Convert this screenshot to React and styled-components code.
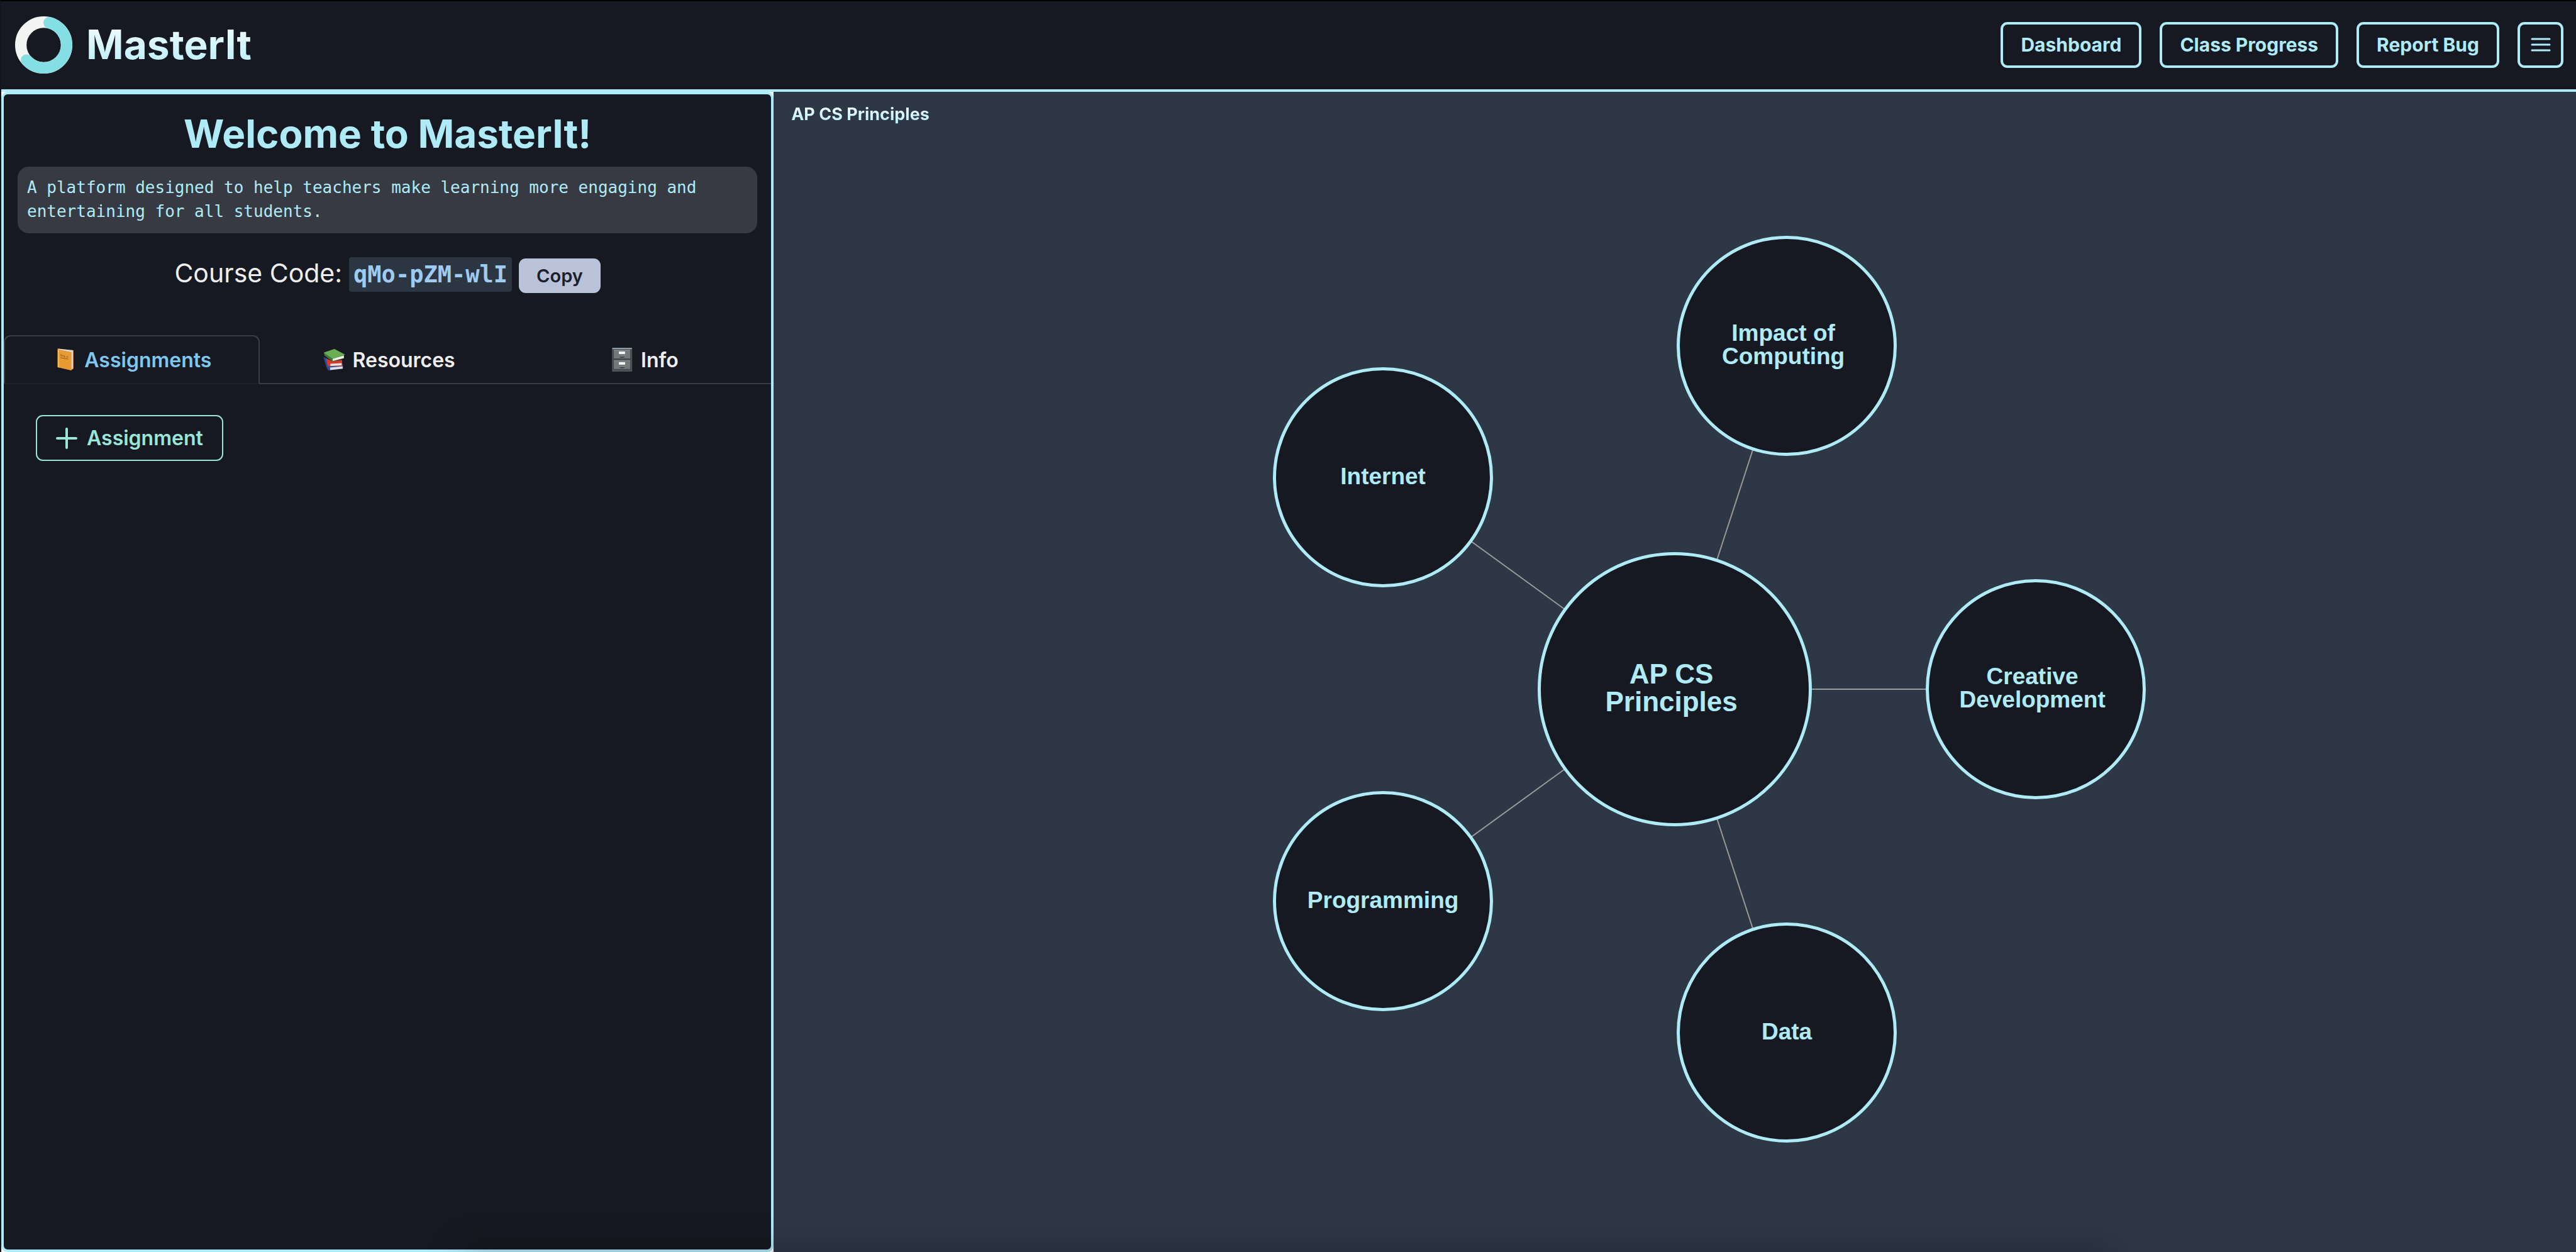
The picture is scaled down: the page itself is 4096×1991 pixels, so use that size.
import React, { useState } from "react";
import styled, { createGlobalStyle } from "styled-components";

const c = {
  night: "#171922",
  slate: "#2d3746",
  ice: "#aeebf7",
  mint: "#9ae6d9",
  line: "#3b3e47",
  text: "#eeeeee",
};

const GlobalStyle = createGlobalStyle`
  *, *::before, *::after { box-sizing: border-box; }
  body {
    margin: 0;
    background: #ffffff;
    color: ${c.text};
    font-family: Inter, "Liberation Sans", sans-serif;
  }
  h1, h2, p { margin: 0; }
  button { margin: 0; font-family: inherit; cursor: pointer; }
`;

const Shell = styled.div`
  display: flex;
  flex-direction: column;
  min-height: 100vh;
  border-top: 2px solid #000000;
  border-left: 2px solid #15141b;
`;

const Header = styled.header`
  display: flex;
  align-items: center;
  justify-content: space-between;
  height: 144px;
  padding: 0 20px 2px 22px;
  background: ${c.night};
  border-bottom: 4px solid ${c.ice};
`;

const Brand = styled.div`
  display: flex;
  align-items: center;
  gap: 22px;
`;

const LogoMark = styled.svg`
  width: 91px;
  height: 91px;
`;

const gradientText = `
  background: linear-gradient(#ffffff, ${c.ice});
  background-clip: text;
  -webkit-background-clip: text;
  color: transparent;
`;

const BrandName = styled.h1`
  font-size: 64px;
  line-height: 96px;
  font-weight: 700;
  ${gradientText}
`;

const Nav = styled.nav`
  display: flex;
  gap: 29px;
`;

const NavButton = styled.button`
  display: flex;
  align-items: center;
  justify-content: center;
  min-width: 73px;
  height: 73px;
  padding: 0 ${(p) => (p.$icon ? 0 : 28)}px;
  border: 4px solid ${c.ice};
  border-radius: 11px;
  background: transparent;
  color: ${c.ice};
  font-size: 30px;
  font-weight: 700;
`;

const MenuIcon = styled.svg`
  width: 32px;
  height: 22px;
`;

const Body = styled.main`
  display: flex;
  flex: 1;
`;

const SidePanel = styled.aside`
  display: flex;
  flex-direction: column;
  flex: 0 0 30%;
  border: 4px solid ${c.ice};
  border-radius: 10px;
  background: ${c.night};
`;

const Welcome = styled.h2`
  padding-top: 17px;
  color: ${c.ice};
  font-size: 62px;
  line-height: 92px;
  font-weight: 700;
  text-align: center;
`;

const Description = styled.p`
  margin: 6px 22px 0;
  padding: 14px 15px 16px;
  border-radius: 18px;
  background: #383a43;
  color: ${c.ice};
  font-family: "DejaVu Sans Mono", monospace;
  font-size: 26px;
  line-height: 38px;
`;

const CourseRow = styled.div`
  display: flex;
  align-items: baseline;
  justify-content: center;
  gap: 11px;
  margin-top: 36px;
`;

const CourseLabel = styled.span`
  font-size: 41px;
  line-height: 55px;
`;

const CourseCode = styled.code`
  padding: 0 7px;
  border-radius: 4px;
  background: #2c3642;
  color: #9ecbf2;
  font-family: "DejaVu Sans Mono", monospace;
  font-size: 37px;
  line-height: 55px;
  font-weight: 700;
`;

const CopyButton = styled.button`
  height: 55px;
  padding: 0 28px;
  border: 0;
  border-radius: 11px;
  background: #b9c2d9;
  color: #1b202c;
  font-size: 29px;
  font-weight: 600;
`;

const TabList = styled.div`
  display: flex;
  margin-top: 67px;
  border-bottom: 2px solid ${c.line};
`;

const Tab = styled.button`
  display: flex;
  flex: 1 1 0;
  align-items: center;
  justify-content: center;
  gap: 12px;
  height: 78px;
  margin-bottom: -2px;
  padding: 0 0 0 4px;
  border: 2px solid transparent;
  border-radius: 11px 11px 0 0;
  background: transparent;
  color: ${c.text};
  font-size: 32px;
  font-weight: 600;

  &[aria-selected="true"] {
    border-color: ${c.line} ${c.line} #1c202b;
    background: ${c.night};
    color: #80c7ee;
  }
`;

const TabIcon = styled.svg`
  width: 36px;
  height: 40px;
`;

const TabPanel = styled.div`
  padding: 49px 51px;
`;

const AddButton = styled.button`
  display: flex;
  align-items: center;
  gap: 15px;
  height: 73px;
  padding: 0 30px;
  border: 2px solid ${c.mint};
  border-radius: 11px;
  background: transparent;
  color: ${c.mint};
  font-size: 32px;
  font-weight: 600;
`;

const PlusIcon = styled.svg`
  width: 34px;
  height: 34px;
`;

const Canvas = styled.section`
  display: flex;
  flex: 1;
  flex-direction: column;
  background: ${c.slate};
`;

const CanvasTitle = styled.h2`
  align-self: flex-start;
  margin: 16px 28px 0;
  font-size: 27px;
  line-height: 39px;
  font-weight: 700;
  ${gradientText}
`;

const Stage = styled.div`
  position: relative;
  flex: 1;
  min-height: 1600px;
`;

const Links = styled.svg`
  position: absolute;
  left: calc(50% - 600px);
  top: calc(50% - 600px);
  width: 1200px;
  height: 1200px;
`;

const Node = styled.button`
  position: absolute;
  left: calc(50% + ${(p) => p.$x - p.$size / 2}px);
  top: calc(50% + ${(p) => p.$y - p.$size / 2}px);
  display: flex;
  align-items: center;
  justify-content: center;
  width: ${(p) => p.$size}px;
  height: ${(p) => p.$size}px;
  padding: 0 ${(p) => (p.$wrapped ? 11 : 0)}px 4px 0;
  border: 5px solid ${c.ice};
  border-radius: 50%;
  background: ${c.night};
  color: ${c.ice};
  font-family: "Liberation Sans", Arial, sans-serif;
  font-size: ${(p) => (p.$root ? 44 : 37)}px;
  line-height: ${(p) => (p.$root ? 44 : 37)}px;
  font-weight: 700;
  text-align: center;
  white-space: pre-line;
`;

const DockShadow = styled.div`
  position: fixed;
  top: 100%;
  left: 18%;
  right: 18%;
  height: 60px;
  box-shadow: 0 0 60px rgba(0, 0, 0, 0.26);
  pointer-events: none;
`;

const topics = [
  { name: "Creative\nDevelopment", x: 574, y: 0 },
  { name: "Data", x: 178, y: 546 },
  { name: "Programming", x: -464, y: 337 },
  { name: "Internet", x: -464, y: -337 },
  { name: "Impact of\nComputing", x: 178, y: -546 },
];

function Logo() {
  return (
    <LogoMark viewBox="0 0 100 100" aria-hidden="true" fill="none" strokeWidth="20">
      <circle cx="50" cy="50" r="40" stroke="#f4f4f4" />
      <path d="M59.5 11.2 A40 40 0 1 1 20 76.5" stroke="#84dfe5" strokeLinecap="round" />
    </LogoMark>
  );
}

function BookIcon() {
  return (
    <TabIcon viewBox="0 0 40 44" aria-hidden="true">
      <path d="M2.5 3 L6.5 2 V35.5 L2.5 34.5 Z" fill="#1d1712" />
      <path d="M6 2.2 L34.4 5.2 V38 L30.3 41 L6 35 Z" fill="#b5641f" />
      <path d="M7 2.6 L33.6 5.4 V37.2 L30.3 39.4 V9 L8 4.4 Z" fill="#d9d6d2" />
      <path d="M6.5 4 L30.3 9 V41 L6.5 35.4 Z" fill="#e89a33" />
      <path d="M6.5 4 L9 4.6 V36 L6.5 35.4 Z" fill="#f5b64c" />
      <path d="M11 12.2 l2 3.6 1.4-2.8 M16 14 v3 M18.5 14.4 v3 h2 M24 15.4 l-1.6 2.2 h2.6 M11 18.4 l14 2.6" fill="none" stroke="#8f5418" strokeWidth="1" />
    </TabIcon>
  );
}

function BooksIcon() {
  return (
    <TabIcon viewBox="4 26 112 122" aria-hidden="true">
      <path d="M8 74 L22 80 L32 118 L104 110 L106 130 L32 141 L22 122 Z" fill="#2b4a9c" />
      <path d="M40 126 L102 120 L104 131 L42 138 Z" fill="#dcdfe6" />
      <path d="M21 80 L52 95 L100 88 L102 119 L29 120 Z" fill="#d23a2b" />
      <path d="M42 107 L98 104 L98 115 L42 118 Z" fill="#e9e5e3" />
      <path d="M10 52 L62 34 L114 61 L109 66 L110 80 L53 96 L13 66 Z" fill="#3f7a35" />
      <path d="M54 82 L109 66 L109 79 L54 93 Z" fill="#ecefeb" />
      <path d="M10 52 L62 34 L114 61 L54 82 Z" fill="#6bad55" />
    </TabIcon>
  );
}

function CabinetIcon() {
  return (
    <TabIcon viewBox="-2 -1 38 43" aria-hidden="true">
      <rect width="34.4" height="41" rx="1" fill="#4c5356" />
      <rect x="0.6" y="0.4" width="33.2" height="2" fill="#9aacb0" />
      {[3.3, 21.3].map((y) => (
        <g key={y}>
          <rect x="2.6" y={y} width="29" height="15.6" fill="#72797b" stroke="#3a4043" strokeWidth="0.9" />
          <rect x="3.2" y={y + 0.6} width="27.8" height="1" fill="#949d9f" />
          <rect x="11.4" y={y + 2.8} width="11.2" height="5.2" fill="#f4f4f4" stroke="#565c5f" strokeWidth="0.6" />
          <path d={`M11.4 ${y + 10.6} h11.2 c0 4.4 -11.2 4.4 -11.2 0 Z`} fill="#363d40" />
          <rect x="11.4" y={y + 10.4} width="11.2" height="1.2" fill="#9ba4a6" />
        </g>
      ))}
    </TabIcon>
  );
}

const tabs = [
  { name: "Assignments", Icon: BookIcon },
  { name: "Resources", Icon: BooksIcon },
  { name: "Info", Icon: CabinetIcon },
];

export default function App() {
  const [active, setActive] = useState("Assignments");
  return (
    <>
      <GlobalStyle />
      <Shell>
        <Header>
          <Brand>
            <Logo />
            <BrandName>MasterIt</BrandName>
          </Brand>
          <Nav>
            <NavButton>Dashboard</NavButton>
            <NavButton>Class Progress</NavButton>
            <NavButton>Report Bug</NavButton>
            <NavButton $icon aria-label="Menu">
              <MenuIcon viewBox="0 0 32 22" aria-hidden="true" stroke="currentColor" strokeWidth="3" strokeLinecap="round">
                <path d="M2 2h28M2 11h28M2 20h28" />
              </MenuIcon>
            </NavButton>
          </Nav>
        </Header>
        <Body>
          <SidePanel>
            <Welcome>Welcome to MasterIt!</Welcome>
            <Description>
              A platform designed to help teachers make learning more engaging and entertaining for all students.
            </Description>
            <CourseRow>
              <CourseLabel>Course Code:</CourseLabel>
              <CourseCode>qMo-pZM-wlI</CourseCode>
              <CopyButton>Copy</CopyButton>
            </CourseRow>
            <TabList role="tablist">
              {tabs.map(({ name, Icon }) => (
                <Tab key={name} role="tab" aria-selected={active === name} onClick={() => setActive(name)}>
                  <Icon />
                  {name}
                </Tab>
              ))}
            </TabList>
            <TabPanel role="tabpanel">
              <AddButton>
                <PlusIcon viewBox="0 0 34 34" aria-hidden="true" stroke="currentColor" strokeWidth="4" strokeLinecap="round">
                  <path d="M17 2v30M2 17h30" />
                </PlusIcon>
                Assignment
              </AddButton>
            </TabPanel>
          </SidePanel>
          <Canvas>
            <CanvasTitle>AP CS Principles</CanvasTitle>
            <Stage>
              <Links viewBox="-600 -600 1200 1200" aria-hidden="true" stroke="#999999" strokeWidth="2">
                {topics.map((t) => (
                  <line key={t.name} x1="0" y1="0" x2={t.x} y2={t.y} />
                ))}
              </Links>
              <Node $root $wrapped $x={0} $y={0} $size={436}>
                {"AP CS\nPrinciples"}
              </Node>
              {topics.map((t) => (
                <Node key={t.name} $x={t.x} $y={t.y} $size={350} $wrapped={t.name.includes("\n")}>
                  {t.name}
                </Node>
              ))}
            </Stage>
          </Canvas>
        </Body>
        <DockShadow />
      </Shell>
    </>
  );
}
